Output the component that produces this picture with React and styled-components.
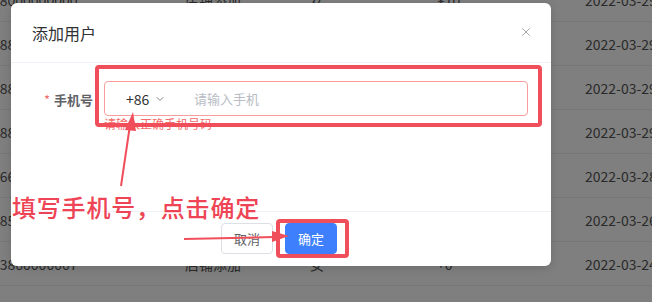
import styled, { createGlobalStyle } from "styled-components";
import { X, ChevronDown } from "lucide-react";

const Global = createGlobalStyle`
  html, body {
    margin: 0;
    padding: 0;
    width: 652px;
    height: 302px;
    overflow: hidden;
    background: #fff;
    font-family: "Noto Sans CJK SC", "Liberation Sans", sans-serif;
  }
`;

const rows = [
  ["18000000000", "店铺添加", "女", "¥10", "2022-03-29"],
  ["18888888888", "店铺添加", "女", "¥10", "2022-03-29"],
  ["18888888888", "店铺添加", "女", "¥10", "2022-03-29"],
  ["18888888888", "店铺添加", "女", "¥10", "2022-03-29"],
  ["16666666666", "店铺添加", "女", "¥10", "2022-03-28"],
  ["18555555555", "店铺添加", "女", "¥10", "2022-03-26"],
  ["13860000007", "店铺添加", "女", "+0", "2022-03-24"],
  ["", "", "", "", ""],
];

const App = () => {
  return (
    <Page>
      <Global />
      <Table>
        {rows.map((r, i) => (
          <Row key={i}>
            {r.map((c, j) => (
              <Cell key={j}>{c}</Cell>
            ))}
          </Row>
        ))}
      </Table>
      <Mask />
      <Dialog>
        <Header>
          <Title>添加用户</Title>
          <Close>
            <X size={14} strokeWidth={1.4} />
          </Close>
        </Header>
        <Body>
          <FormRow>
            <Label>
              <Star>*</Star>手机号
            </Label>
            <Field>
              <PhoneInput>
                <Code>
                  +86
                  <ChevronDown size={12} strokeWidth={1.6} color="#606266" />
                </Code>
                <Placeholder>请输入手机</Placeholder>
              </PhoneInput>
              <ErrorText>请输入正确手机号码</ErrorText>
            </Field>
          </FormRow>
        </Body>
        <Footer>
          <Btn>取消</Btn>
          <Btn primary>确定</Btn>
        </Footer>
      </Dialog>
      <Notes width="652" height="302" viewBox="0 0 652 302">
        <rect x="97" y="67" width="443" height="58" rx="2" fill="none" stroke="#f04e5a" strokeWidth="4" />
        <rect x="278" y="221" width="69" height="35" rx="2" fill="none" stroke="#f04e5a" strokeWidth="4" />
        <line x1="121" y1="186" x2="130" y2="125" stroke="#f04e5a" strokeWidth="2" />
        <polygon points="133,112 125,130 136,131" fill="#f04e5a" />
        <line x1="184" y1="239" x2="274" y2="237" stroke="#f04e5a" strokeWidth="2" />
        <polygon points="289,236 272,231 272,242" fill="#f04e5a" />
      </Notes>
      <Caption>填写手机号，点击确定</Caption>
    </Page>
  );
};

export default App;

const Page = styled.div`
  position: relative;
  width: 652px;
  height: 302px;
  overflow: hidden;
`;

const Table = styled.div`
  margin-top: -22px;
  margin-left: -8px;
`;

const Row = styled.div`
  display: grid;
  grid-template-columns: 193px 125px 127px 148px 1fr;
  height: 44px;
  align-items: center;
  border-bottom: 1px solid #ebeef5;
  box-sizing: border-box;
`;

const Cell = styled.div`
  font-size: 14px;
  color: #555;
  white-space: nowrap;
`;

const Mask = styled.div`
  position: absolute;
  inset: 0;
  background: rgba(0, 0, 0, 0.5);
`;

const Dialog = styled.div`
  position: absolute;
  left: 11px;
  top: 3px;
  width: 540px;
  height: 263px;
  background: #fff;
  border-radius: 6px;
  box-shadow: 0 2px 10px rgba(0, 0, 0, 0.15);
  display: flex;
  flex-direction: column;
`;

const Header = styled.div`
  height: 59px;
  display: flex;
  align-items: center;
  justify-content: space-between;
  padding: 0 18px 0 21px;
  border-bottom: 1px solid #f0f0f7;
`;

const Title = styled.div`
  font-size: 16px;
  color: #303133;
`;

const Close = styled.div`
  display: flex;
  color: #909399;
  margin-top: -2px;
`;

const Body = styled.div`
  flex: 1;
  padding: 18px 23px 0 20px;
`;

const FormRow = styled.div`
  display: flex;
  align-items: flex-start;
`;

const Label = styled.div`
  width: 73px;
  box-sizing: border-box;
  padding-right: 11px;
  height: 36px;
  display: flex;
  align-items: center;
  justify-content: flex-end;
  font-size: 13px;
  font-weight: bold;
  color: #606266;
`;

const Star = styled.span`
  color: #f56c6c;
  margin-right: 4px;
  font-weight: normal;
`;

const Field = styled.div`
  flex: 1;
`;

const PhoneInput = styled.div`
  height: 35px;
  border: 1px solid #f89d9d;
  border-radius: 4px;
  display: flex;
  align-items: center;
  box-sizing: border-box;
  padding-left: 21px;
`;

const Code = styled.div`
  display: flex;
  align-items: center;
  gap: 5px;
  width: 68px;
  font-size: 14px;
  color: #303133;
`;

const Placeholder = styled.div`
  font-size: 13px;
  color: #b8bcc4;
`;

const ErrorText = styled.div`
  font-size: 12px;
  color: #f56c6c;
  margin-top: 1px;
  line-height: 14px;
`;

const Footer = styled.div`
  border-top: 1px solid #f0f0f7;
  height: 55px;
  display: flex;
  justify-content: center;
  align-items: center;
  gap: 12px;
  padding-bottom: 2px;
  padding-right: 4px;
  box-sizing: border-box;
`;

const Btn = styled.div`
  height: 31px;
  padding: 0 12px;
  display: flex;
  align-items: center;
  box-sizing: border-box;
  border-radius: 4px;
  font-size: 13px;
  border: 1px solid ${(p) => (p.primary ? "#3d7ffd" : "#dcdfe6")};
  background: ${(p) => (p.primary ? "#3d7ffd" : "#fff")};
  color: ${(p) => (p.primary ? "#fff" : "#606266")};
`;

const Notes = styled.svg`
  position: absolute;
  left: 0;
  top: 0;
`;

const Caption = styled.div`
  position: absolute;
  left: 12px;
  top: 191px;
  font-size: 24px;
  line-height: 32px;
  letter-spacing: 0.8px;
  font-weight: 500;
  color: #ee4455;
  white-space: nowrap;
`;
